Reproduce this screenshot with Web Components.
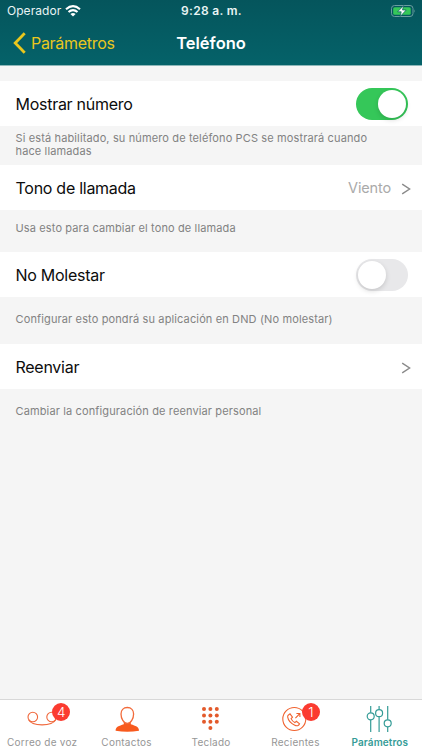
<!DOCTYPE html>
<html lang="es">
<head>
<meta charset="utf-8">
<title>Teléfono</title>
<style>
  body {
    margin: 0;
    font-family: Inter, "Liberation Sans", sans-serif;
    background: #f5f5f5;
  }
</style>
</head>
<body>
<phone-screen>
  <status-bar slot="header" carrier="Operador" time="9:28 a. m."></status-bar>
  <nav-bar slot="header" back="Parámetros">Teléfono</nav-bar>

  <setting-row label="Mostrar número"><toggle-switch checked></toggle-switch></setting-row>
  <setting-note style="--h: 39px; --bottom: 2px">Si está habilitado, su número de teléfono PCS se mostrará cuando hace llamadas</setting-note>
  <setting-row label="Tono de llamada" link>Viento</setting-row>
  <setting-note style="--h: 42px; --bottom: 5px">Usa esto para cambiar el tono de llamada</setting-note>
  <setting-row label="No Molestar"><toggle-switch></toggle-switch></setting-row>
  <setting-note style="--h: 47px; --bottom: 3px">Configurar esto pondrá su aplicación en DND (No molestar)</setting-note>
  <setting-row label="Reenviar" link></setting-row>
  <setting-note style="--h: 45px">Cambiar la configuración de reenviar personal</setting-note>

  <tab-item slot="tabs" label="Correo de voz" badge="4">
    <svg width="36" height="28" viewBox="0 0 36 28" fill="none" stroke="#f0683c" stroke-width="1.1">
      <circle cx="8.8" cy="15" r="4.8"/><circle cx="27.6" cy="15" r="4.8"/>
      <path d="M4.6 17.8C8 24.5 28 24.5 31.8 17.8"/>
    </svg>
  </tab-item>
  <tab-item slot="tabs" label="Contactos">
    <svg width="36" height="28" viewBox="0 0 36 28">
      <path d="M6.6 28.7C6.6 24.500 10 24 14.800 22.200V19h7v3.200C26.600 24 30 24.500 30 28.700Q18.300 31 6.600 28.700Z" fill="#f85a1e"/>
      <path d="M18.300 5.500c4 0 6.300 2.800 6.300 6.500 0 4.500-2.700 9.500-6.300 9.500s-6.300-5-6.300-9.500c0-3.700 2.300-6.500 6.300-6.500Z" fill="#fff" stroke="#f26a3a" stroke-width="1.300"/>
    </svg>
  </tab-item>
  <tab-item slot="tabs" label="Teclado">
    <svg width="36" height="28" viewBox="0 0 36 28" fill="#e35a2b">
      <circle cx="11" cy="7" r="2"/><circle cx="17.400" cy="7" r="2"/><circle cx="23.800" cy="7" r="2"/>
      <circle cx="11" cy="13.400" r="2"/><circle cx="17.400" cy="13.400" r="2"/><circle cx="23.800" cy="13.400" r="2"/>
      <circle cx="11" cy="19.800" r="2"/><circle cx="17.400" cy="19.800" r="2"/><circle cx="23.800" cy="19.800" r="2"/>
      <circle cx="17.400" cy="26" r="2"/>
    </svg>
  </tab-item>
  <tab-item slot="tabs" label="Recientes" badge="1">
    <svg width="36" height="28" viewBox="0 0 36 28" fill="none" stroke="#f0622f" stroke-width="1.100">
      <circle cx="17.300" cy="17" r="11.500"/>
      <path d="M11.200 13.200l1.800-1.400 2.500 3.300-1.400 1.500c.8 1.900 1.900 3.100 3.700 4l1.600-1.300 3.200 2.500c-.9 2-2.600 2.500-4.800 1.500-3.700-1.700-6.600-5.200-7.100-8.100-.1-.8 0-1.500.5-2Z"/>
      <path d="M18.400 16.200l4.400-4.600m-3.400-.1h3.500v3.500"/>
    </svg>
  </tab-item>
  <tab-item slot="tabs" label="Parámetros" active>
    <svg width="36" height="28" viewBox="0 0 36 28" fill="none" stroke="#359c97" stroke-width="1.200">
      <path d="M8.700 4v6.800M8.700 17.800v12.200M17.100 4v3.700M17.100 14.700v15.300M25.700 4v13.800M25.700 24.800v5.200"/>
      <circle cx="8.700" cy="14.300" r="3.500"/><circle cx="17.100" cy="11.200" r="3.500"/><circle cx="25.700" cy="21.300" r="3.500"/>
    </svg>
  </tab-item>
</phone-screen>

<script>
// Crea el shadow root abierto con su contenido
function render(el, html) {
  const template = document.createElement('template');
  template.innerHTML = html;
  el.attachShadow({ mode: 'open' }).appendChild(template.content.cloneNode(true));
}

// Pantalla completa: cabecera, contenido y pestañas
class PhoneScreen extends HTMLElement {
  constructor() {
    super();
    render(this, `
      <style>
        :host { display: flex; flex-direction: column; height: 750px; width: 422px; overflow: hidden; }
        header {
          height: 65px;
          flex: none;
          background: linear-gradient(#05555c, #056269);
          border-bottom: 1px solid #8db7b9;
        }
        main { flex: 1; padding-top: 15px; background: #f5f5f5; }
        footer {
          display: flex;
          height: 50px;
          flex: none;
          background: #fff;
          border-top: 1px solid #d8d8d8;
        }
      </style>
      <header><slot name="header"></slot></header>
      <main><slot></slot></main>
      <footer><slot name="tabs"></slot></footer>
    `);
  }
}

// Barra de estado con operador, hora y batería
class StatusBar extends HTMLElement {
  connectedCallback() {
    render(this, `
      <style>
        :host {
          display: grid;
          grid-template-columns: 1fr auto 1fr;
          align-items: center;
          height: 21px;
          padding: 0 6px 0 7px;
          color: #e9f4f4;
          font-size: 12px;
        }
        .left { display: flex; align-items: center; gap: 4px; letter-spacing: 0.050px; }
        .time { font-weight: 600; letter-spacing: 0.300px; }
        .battery { justify-self: end; }
        svg { display: block; }
      </style>
      <div class="left">
        <span>${this.getAttribute('carrier')}</span>
        <svg width="16" height="12" viewBox="0 0 16 12" fill="none" stroke="#fff" stroke-width="2.100">
          <path d="M1 4.300Q8-1.900 15 4.300M3.500 7Q8 3.100 12.500 7"/>
          <path d="M5.400 8.900Q8 6.900 10.600 8.900L8 11.600Z" fill="#fff" stroke="none"/>
        </svg>
      </div>
      <span class="time">${this.getAttribute('time')}</span>
      <svg class="battery" width="26" height="12" viewBox="0 0 26 12">
        <rect x="1.500" y=".5" width="21.500" height="11" rx="3" fill="none" stroke="#6b9da0"/>
        <rect x="3.200" y="2.200" width="17.500" height="7.600" rx="1.500" fill="#35c759"/>
        <path d="M24.300 4.300q1.400 1.700 0 3.400Z" fill="#6b9da0"/>
        <path d="M13.600.6L7.600 6.800h3.600l-1 4.700 6-6.500h-3.700Z" fill="#fff" stroke="#07595f" stroke-width=".7"/>
      </svg>
    `);
  }
}

// Barra de navegación con botón para volver
class NavBar extends HTMLElement {
  connectedCallback() {
    render(this, `
      <style>
        :host {
          display: grid;
          grid-template-columns: 1fr auto 1fr;
          align-items: center;
          height: 44px;
          padding: 0 13px;
        }
        .back { display: flex; align-items: center; gap: 5px; color: #eac71d; font-size: 16px; letter-spacing: -0.300px; }
        .title { color: #fff; font-size: 16.500px; font-weight: 600; }
      </style>
      <div class="back">
        <svg width="13" height="22" viewBox="0 0 13 22" fill="none" stroke="#eac71d" stroke-width="2.800">
          <path d="M11.700 1.300L2.200 11l9.500 9.700"/>
        </svg>
        <span>${this.getAttribute('back')}</span>
      </div>
      <span class="title"><slot></slot></span>
    `);
  }
}

// Fila de ajuste; con "link" muestra la flecha
class SettingRow extends HTMLElement {
  connectedCallback() {
    const arrow = `
      <svg width="10" height="12" viewBox="0 0 10 12" fill="none" stroke="#8a8a8a" stroke-width="1.400">
        <path d="M1.200 1.200L8.600 6 1.200 10.800"/>
      </svg>`;
    render(this, `
      <style>
        :host {
          display: flex;
          align-items: center;
          justify-content: space-between;
          box-sizing: border-box;
          height: 45px;
          padding: 0 14.500px 0 15.500px;
          background: #fff;
          color: #0c0c0c;
          font-size: 16px;
          letter-spacing: -0.270px;
        }
        :host([link]) { padding-right: 11px; }
        .value { display: flex; align-items: center; gap: 10px; color: #aaa; font-size: 14.500px; letter-spacing: -0.150px; }
        svg { margin-top: 3px; }
      </style>
      <span>${this.getAttribute('label')}</span>
      <div class="value"><span><slot></slot></span>${this.hasAttribute('link') ? arrow : ''}</div>
    `);
  }
}

// Texto explicativo debajo de cada fila
class SettingNote extends HTMLElement {
  constructor() {
    super();
    render(this, `
      <style>
        :host {
          display: flex;
          align-items: center;
          box-sizing: border-box;
          height: var(--h);
          padding: 0 40px var(--bottom, 0) 15.500px;
          color: #828282;
          font-size: 11px;
          line-height: 13px;
          letter-spacing: 0.130px;
        }
        p { margin: 0; }
      </style>
      <p><slot></slot></p>
    `);
  }
}

// Interruptor
class ToggleSwitch extends HTMLElement {
  constructor() {
    super();
    render(this, `
      <style>
        :host {
          display: flex;
          box-sizing: border-box;
          width: 52px;
          height: 32px;
          padding: 2px;
          border-radius: 16px;
          background: #e8e8ea;
        }
        :host([checked]) { background: #35c759; justify-content: flex-end; }
        .knob {
          width: 28px;
          height: 28px;
          border-radius: 50%;
          background: #fff;
          box-shadow: 0 2px 5px rgba(0, 0, 0, 0.15);
        }
      </style>
      <div class="knob"></div>
    `);
  }
}

// Pestaña inferior con icono y globo opcional
class TabItem extends HTMLElement {
  connectedCallback() {
    const badge = this.getAttribute('badge');
    render(this, `
      <style>
        :host {
          display: flex;
          flex: 1;
          flex-direction: column;
          align-items: center;
          color: #969696;
          font-size: 10px;
          letter-spacing: 0.250px;
          line-height: 12px;
          white-space: nowrap;
        }
        :host([active]) { color: #359c97; font-weight: 600; letter-spacing: 0.100px; }
        .icon { position: relative; height: 36px; }
        ::slotted(svg) { display: block; overflow: visible; margin-top: 2px; }
        .badge {
          position: absolute;
          left: 28px;
          top: 3px;
          width: 18px;
          height: 18px;
          border-radius: 50%;
          background: #fb3b30;
          color: #fff;
          font-size: 13.500px;
          font-weight: 300;
          line-height: 18px;
          letter-spacing: 0;
          text-align: center;
        }
        :host([badge="1"]) .badge { left: 24.500px; }
      </style>
      <div class="icon"><slot></slot>${badge ? `<span class="badge">${badge}</span>` : ''}</div>
      <span>${this.getAttribute('label')}</span>
    `);
  }
}

customElements.define('phone-screen', PhoneScreen);
customElements.define('status-bar', StatusBar);
customElements.define('nav-bar', NavBar);
customElements.define('setting-row', SettingRow);
customElements.define('setting-note', SettingNote);
customElements.define('toggle-switch', ToggleSwitch);
customElements.define('tab-item', TabItem);
</script>
</body>
</html>
